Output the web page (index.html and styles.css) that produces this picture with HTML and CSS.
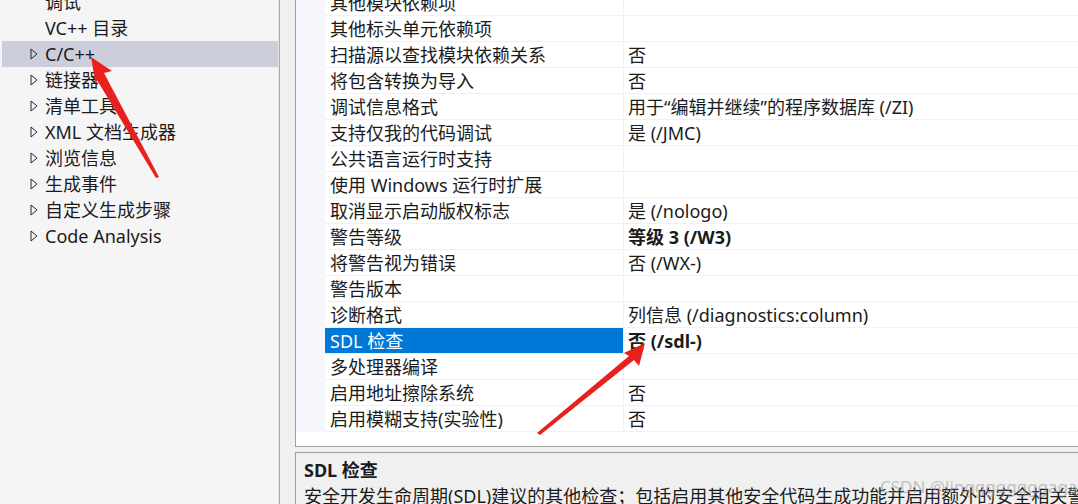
FILE: index.html
```html
<!DOCTYPE html>
<html lang="zh-CN">
<head>
<meta charset="utf-8">
<title>属性页</title>
<link rel="stylesheet" href="styles.css">
</head>
<body>
<div class="page">
  <div class="tree">
    <div class="tree-list">
      <div class="node leaf"><span class="label">调试</span></div>
      <div class="node leaf"><span class="label">VC++ 目录</span></div>
      <div class="node selected"><svg class="tri" viewBox="0 0 8 12"><polygon points="1,1 7,6 1,11" /></svg><span class="label">C/C++</span></div>
      <div class="node"><svg class="tri" viewBox="0 0 8 12"><polygon points="1,1 7,6 1,11" /></svg><span class="label">链接器</span></div>
      <div class="node"><svg class="tri" viewBox="0 0 8 12"><polygon points="1,1 7,6 1,11" /></svg><span class="label">清单工具</span></div>
      <div class="node"><svg class="tri" viewBox="0 0 8 12"><polygon points="1,1 7,6 1,11" /></svg><span class="label">XML 文档生成器</span></div>
      <div class="node"><svg class="tri" viewBox="0 0 8 12"><polygon points="1,1 7,6 1,11" /></svg><span class="label">浏览信息</span></div>
      <div class="node"><svg class="tri" viewBox="0 0 8 12"><polygon points="1,1 7,6 1,11" /></svg><span class="label">生成事件</span></div>
      <div class="node"><svg class="tri" viewBox="0 0 8 12"><polygon points="1,1 7,6 1,11" /></svg><span class="label">自定义生成步骤</span></div>
      <div class="node"><svg class="tri" viewBox="0 0 8 12"><polygon points="1,1 7,6 1,11" /></svg><span class="label">Code Analysis</span></div>
    </div>
  </div>
  <div class="splitter"></div>
  <div class="right">
    <div class="grid">
      <div class="rows">
        <div class="row"><div class="gut"></div><div class="name">其他模块依赖项</div><div class="val"></div></div>
        <div class="row"><div class="gut"></div><div class="name">其他标头单元依赖项</div><div class="val"></div></div>
        <div class="row"><div class="gut"></div><div class="name">扫描源以查找模块依赖关系</div><div class="val">否</div></div>
        <div class="row"><div class="gut"></div><div class="name">将包含转换为导入</div><div class="val">否</div></div>
        <div class="row"><div class="gut"></div><div class="name">调试信息格式</div><div class="val">用于“编辑并继续”的程序数据库 (/ZI)</div></div>
        <div class="row"><div class="gut"></div><div class="name">支持仅我的代码调试</div><div class="val">是 (/JMC)</div></div>
        <div class="row"><div class="gut"></div><div class="name">公共语言运行时支持</div><div class="val"></div></div>
        <div class="row"><div class="gut"></div><div class="name">使用 Windows 运行时扩展</div><div class="val"></div></div>
        <div class="row"><div class="gut"></div><div class="name">取消显示启动版权标志</div><div class="val">是 (/nologo)</div></div>
        <div class="row"><div class="gut"></div><div class="name">警告等级</div><div class="val bold">等级 3 (/W3)</div></div>
        <div class="row"><div class="gut"></div><div class="name">将警告视为错误</div><div class="val">否 (/WX-)</div></div>
        <div class="row"><div class="gut"></div><div class="name">警告版本</div><div class="val"></div></div>
        <div class="row"><div class="gut"></div><div class="name">诊断格式</div><div class="val">列信息 (/diagnostics:column)</div></div>
        <div class="row sel"><div class="gut"></div><div class="name">SDL 检查</div><div class="val bold">否 (/sdl-)</div></div>
        <div class="row"><div class="gut"></div><div class="name">多处理器编译</div><div class="val"></div></div>
        <div class="row"><div class="gut"></div><div class="name">启用地址擦除系统</div><div class="val">否</div></div>
        <div class="row"><div class="gut"></div><div class="name">启用模糊支持(实验性)</div><div class="val">否</div></div>
      </div>
    </div>
    <div class="desc">
      <div class="desc-title">SDL 检查</div>
      <div class="desc-text">安全开发生命周期(SDL)建议的其他检查；包括启用其他安全代码生成功能并启用额外的安全相关警告作为错误。</div>
    </div>
  </div>
</div>
<div class="watermark">CSDN @linggggggggaga</div>
<svg class="arrows" width="1078" height="504" viewBox="0 0 1078 504">
  <polygon fill="#e8201e" points="91,57 112,71 104,73 159,177 156,178 97,80 96,86" />
  <polygon fill="#e8201e" points="645,343 639,366 634,360 540,435 537,433 629,356 624,353" />
</svg>
</body>
</html>
```

FILE: styles.css
```css
html, body {
  margin: 0;
  padding: 0;
}
body {
  width: 1078px;
  height: 504px;
  overflow: hidden;
  position: relative;
  font-family: "Noto Sans", "Noto Sans CJK SC", sans-serif;
  font-size: 18px;
  color: #1b1b1b;
  background: #f0f0f0;
}
.page {
  display: flex;
  height: 504px;
}
.tree {
  width: 276px;
  padding-left: 2px;
  background: #f5f5f5;
  border-right: 1px solid #e8e8e8;
  box-shadow: 1px 0 0 #a8a8a8;
  overflow: hidden;
  flex: none;
}
.tree-list {
  margin-top: -11px;
}
.node {
  height: 26px;
  display: flex;
  align-items: center;
  white-space: nowrap;
}
.node.selected {
  background: #cccedb;
}
.tri {
  width: 8px;
  height: 12px;
  margin-left: 28px;
  flex: none;
}
.tri polygon {
  fill: none;
  stroke: #2b2b2b;
  stroke-width: 1;
}
.label {
  margin-left: 7px;
  line-height: 26px;
}
.leaf .label {
  margin-left: 43px;
}
.splitter {
  width: 15px;
  margin-left: 1px;
  flex: none;
  background: #f0f0f0;
}
.right {
  flex: 1;
  display: flex;
  flex-direction: column;
  min-width: 0;
}
.grid {
  height: 447px;
  box-sizing: border-box;
  background: #ffffff;
  border-left: 1px solid #a0a0a0;
  border-bottom: 1px solid #a0a0a0;
  overflow: hidden;
}
.rows {
  margin-top: -10px;
}
.row {
  display: flex;
  height: 26px;
}
.gut {
  width: 29px;
  flex: none;
  background: #f5f7fc;
}
.name {
  width: 293px;
  flex: none;
  padding-left: 5px;
  padding-top: 2px;
  height: 23px;
  border-bottom: 1px solid #eef1f7;
  border-right: 1px solid #eef1f7;
  line-height: 23px;
  white-space: nowrap;
  overflow: hidden;
}
.val {
  flex: 1;
  padding-left: 4px;
  padding-top: 2px;
  height: 23px;
  border-bottom: 1px solid #eef1f7;
  line-height: 23px;
  white-space: nowrap;
  overflow: hidden;
}
.bold {
  font-weight: 700;
}
.row.sel .name {
  background: #0078d7;
  color: #ffffff;
}
.desc {
  margin-top: 5px;
  flex: 1;
  border-left: 1px solid #a0a0a0;
  border-top: 1px solid #a0a0a0;
  background: #f0f0f0;
  padding: 4px 0 0 8px;
  overflow: hidden;
}
.desc-title {
  font-weight: 700;
  line-height: 26px;
  white-space: nowrap;
}
.desc-text {
  line-height: 26px;
  white-space: nowrap;
}
.watermark {
  position: absolute;
  left: 880px;
  top: 475px;
  font-size: 17px;
  color: rgba(150, 150, 150, 0.55);
  white-space: nowrap;
}
.arrows {
  position: absolute;
  left: 0;
  top: 0;
  pointer-events: none;
}
```
